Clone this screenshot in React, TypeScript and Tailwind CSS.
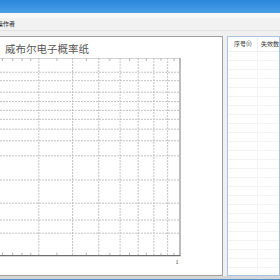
import React from 'react';

// Weibull probability paper: x axis log10, 270px per decade, 1.0 at x=180
const px = (v: number) => 180 + 270 * Math.log10(v);
// y axis ln(-ln(1-F)), top of plot (F=0.99) at 0
const py = (f: number) => 107.55 - 32.2 * Math.log(-Math.log(1 - f)) - 58;

const gridX = [0.3, 0.4, 0.5, 0.6, 0.7, 0.8, 0.9];
const tickX = [0.22, 0.24, 0.26, 0.28, 0.35, 0.45, 0.55, 0.65, 0.75, 0.85, 0.95];
const gridY = [0.02, 0.03, 0.05, 0.1, 0.2, 0.3, 0.4, 0.5, 0.6, 0.7, 0.8, 0.9, 0.95];

function WeibullChart() {
  const bottom = py(0.01);
  return (
    <svg width={222} height={212} className="block">
      {/* top border */}
      <line x1={0} y1={0.5} x2={180} y2={0.5} stroke="#d4d4d4" strokeWidth={1} />
      {gridX.map(v => (
        <line key={'gx' + v} x1={px(v)} y1={0} x2={px(v)} y2={bottom} stroke="#c2c2c2" strokeWidth={1} strokeDasharray="2 1" />
      ))}
      {gridY.map(f => (
        <line key={'gy' + f} x1={0} y1={py(f)} x2={180} y2={py(f)} stroke="#c2c2c2" strokeWidth={1} strokeDasharray="2 1" />
      ))}
      {tickX.map(v => (
        <g key={'t' + v}>
          <line x1={px(v)} y1={bottom - 3} x2={px(v)} y2={bottom} stroke="#b4b4b4" strokeWidth={1} />
          <line x1={px(v)} y1={0} x2={px(v)} y2={3} stroke="#b4b4b4" strokeWidth={1} />
        </g>
      ))}
      {/* right border + bottom axis */}
      <line x1={180} y1={0} x2={180} y2={bottom} stroke="#7a7a7a" strokeWidth={1} />
      <line x1={0} y1={bottom} x2={180.5} y2={bottom} stroke="#6e6e6e" strokeWidth={1.2} />
      <text x={177} y={bottom + 8} fontSize={6} fill="#333" textAnchor="middle" fontFamily="'Liberation Serif', serif">1</text>
    </svg>
  );
}

export default function App() {
  const rows = Array.from({ length: 26 });
  return (
    <div className="w-[280px] h-[280px] overflow-hidden flex flex-col bg-[#f0f0f0]" style={{ fontFamily: "'Noto Sans CJK SC', sans-serif" }}>
      {/* title bar */}
      <div className="h-[13px] shrink-0 bg-gradient-to-b from-[#2a86dc] to-[#4a9fe8]" />
      <div className="h-[5px] shrink-0 bg-[#f8f8f8]" />

      {/* menu */}
      <div className="h-[13px] shrink-0 bg-[#f2f2f2] border-b border-[#e2e2e2] flex items-center overflow-hidden">
        <span className="text-[6px] leading-none text-[#222] -ml-[3px] whitespace-nowrap">操作者</span>
      </div>

      <div className="h-[5px] shrink-0" />

      {/* main area */}
      <div className="flex-1 flex gap-[4px] min-h-0">
        {/* chart panel */}
        <div className="w-[223px] shrink-0 bg-white border-t border-r border-b border-[#a0a0a0] flex flex-col overflow-hidden">
          <div className="h-[21px] shrink-0 pl-[5px] pt-[6px] text-[10.5px] leading-[11px] text-[#555] whitespace-nowrap">
            威布尔电子概率纸
          </div>
          <WeibullChart />
        </div>

        {/* table */}
        <div className="flex-1 bg-white border border-[#a9c3e3] overflow-hidden">
          <div className="h-[15px] flex border-b border-[#eceff3] text-[6px] leading-none text-[#333]">
            <div className="w-[30px] shrink-0 flex items-center pl-[6px] border-r border-[#eceff3] whitespace-nowrap">序号(i)</div>
            <div className="flex items-center pl-[3px] whitespace-nowrap">失效数据</div>
          </div>
          {rows.map((_, i) => (
            <div key={i} className="h-[9px] flex border-b border-[#f1f3f6]">
              <div className="w-[30px] shrink-0 border-r border-[#f1f3f6]" />
            </div>
          ))}
        </div>
      </div>

      {/* status */}
      <div className="h-[3px] shrink-0 bg-[#d6d6d6]" />
      <div className="h-[1px] shrink-0 bg-[#4f8fd0]" />
    </div>
  );
}
